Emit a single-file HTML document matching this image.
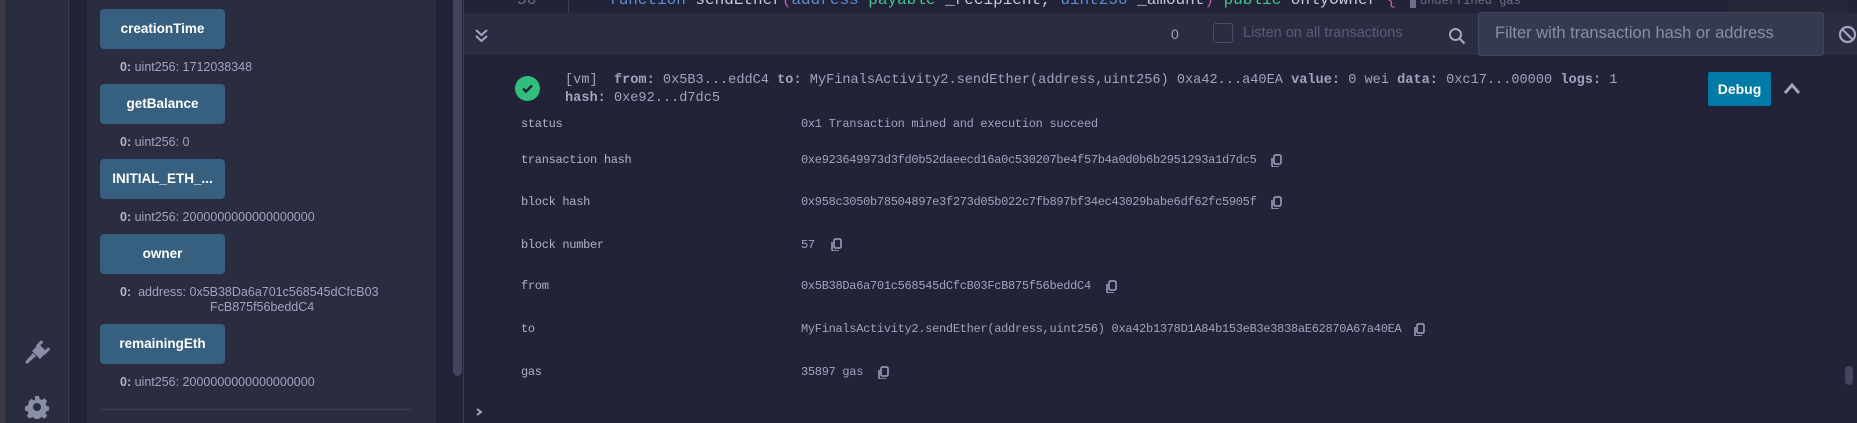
<!DOCTYPE html>
<html><head><meta charset="utf-8"><style>
*{margin:0;padding:0;box-sizing:border-box}
body{width:1857px;height:423px;overflow:hidden;background:#222336;position:relative;font-family:"Liberation Sans",sans-serif}
.a{position:absolute}
.btn{position:absolute;left:100px;width:125px;height:40px;background:#365f80;border-radius:4px;color:#fff;font-weight:bold;font-size:13.5px;text-align:center;line-height:40px}
.res{position:absolute;left:120px;font-size:12.5px;color:#a2a3bd;white-space:nowrap}
.res b{color:#b4b6cc}
.m{font-family:"Liberation Mono",monospace;white-space:nowrap}
.lab{position:absolute;left:521px;font-size:12px;letter-spacing:-0.3px;color:#b0b2c8;font-family:"Liberation Mono",monospace}
.val{position:absolute;left:801px;font-size:12px;letter-spacing:-0.3px;color:#a2a3bd;font-family:"Liberation Mono",monospace;white-space:nowrap}
.cp{position:absolute;width:12px;height:13px}
</style></head><body>
<div class="a" style="left:0;top:0;width:5px;height:423px;background:#3a3a3f"></div>
<div class="a" style="left:5px;top:0;width:63px;height:423px;background:#2a2c3f"></div>
<div class="a" style="left:68px;top:0;width:1px;height:423px;background:#3c3f55"></div>
<div class="a" style="left:69px;top:0;width:18px;height:423px;background:#222336"></div>
<div class="a" style="left:87px;top:0;width:349px;height:423px;background:#2a2c3f"></div>
<div class="a" style="left:436px;top:0;width:27px;height:423px;background:#222336"></div>
<div class="a" style="left:453px;top:0;width:9px;height:376px;background:#41465f;border-radius:0 0 5px 5px"></div>
<div class="a" style="left:463px;top:0;width:1px;height:423px;background:#3c3f55"></div>

<svg class="a" style="left:22px;top:338px" width="30" height="30" viewBox="0 0 30 30"><g fill="#8a8ea5"><path d="M10 13 L17 6 L25 14 L18 21 Z"/><rect x="16" y="2" width="3" height="8" transform="rotate(45 17.5 6)"/><rect x="23" y="9" width="3" height="8" transform="rotate(45 24.5 13)"/><path d="M11 15 L3 24 L5 26 L14 18 Z"/></g></svg>
<svg class="a" style="left:25px;top:395px" width="24" height="24" viewBox="0 0 24 24"><path fill="#8a8ea5" d="M10 1h4l.6 3 2.2 1 2.6-1.7 2.8 2.8-1.7 2.6 1 2.2 3 .6v4l-3 .6-1 2.2 1.7 2.6-2.8 2.8-2.6-1.7-2.2 1-.6 3h-4l-.6-3-2.2-1-2.6 1.7-2.8-2.8 1.7-2.6-1-2.2-3-.6v-4l3-.6 1-2.2L3.6 6.6l2.8-2.8L9 5.5l1-.5zM12 8a4 4 0 100 8 4 4 0 000-8z"/></svg>

<div class="btn" style="top:9px">creationTime</div>
<div class="res" style="top:60px"><b>0:</b> uint256: 1712038348</div>
<div class="btn" style="top:84px">getBalance</div>
<div class="res" style="top:135px"><b>0:</b> uint256: 0</div>
<div class="btn" style="top:159px">INITIAL_ETH_...</div>
<div class="res" style="top:210px"><b>0:</b> uint256: 2000000000000000000</div>
<div class="btn" style="top:234px">owner</div>
<div class="res" style="top:285px"><b>0:</b>&nbsp; address: 0x5B38Da6a701c568545dCfcB03</div>
<div class="res" style="top:300px;left:210px">FcB875f56beddC4</div>
<div class="btn" style="top:324px">remainingEth</div>
<div class="res" style="top:375px"><b>0:</b> uint256: 2000000000000000000</div>
<div class="a" style="left:100px;top:409px;width:312px;height:1px;background:#3c3f55"></div>

<div class="a" style="left:464px;top:0;width:1393px;height:13px;background:#222336;overflow:hidden">
 <div class="a m" style="left:53px;top:-9px;font-size:16px;color:#6b6f88">56</div>
 <div class="a" style="left:104px;top:0;width:1px;height:13px;background:#3c3f55"></div>
 <div class="a m" style="left:145px;top:-9px;font-size:16px;color:#c5c8d8"><span style="color:#5d8ed6">function</span> sendEther<span style="color:#d157a5">(</span><span style="color:#5d8ed6">address</span> <span style="color:#3fc78c">payable</span> _recipient, <span style="color:#5d8ed6">uint256</span> _amount<span style="color:#d157a5">)</span> <span style="color:#3fc78c">public</span> onlyOwner <span style="color:#d157a5">{</span></div>
 <div class="a" style="left:946px;top:0;width:6px;height:8px;background:#6b6f88"></div>
 <div class="a m" style="left:956px;top:-6px;font-size:12px;color:#6b6f88">underfined gas</div>
 <div class="a" style="left:1264px;top:0;width:120px;height:13px;background:#262839"></div>
</div>

<div class="a" style="left:464px;top:13px;width:1393px;height:42px;background:#2a2c3f"></div>
<svg class="a" style="left:474px;top:28px" width="15" height="15" viewBox="0 0 15 15"><path d="M2 2l5.5 5 5.5-5M2 8l5.5 5 5.5-5" stroke="#a2a3bd" stroke-width="2" fill="none"/></svg>
<div class="a" style="left:1171px;top:26px;font-size:14px;color:#a2a3bd">0</div>
<div class="a" style="left:1213px;top:23px;width:20px;height:20px;border:1px solid #4a4e66;border-radius:3px"></div>
<div class="a" style="left:1243px;top:25px;font-size:14.5px;color:#585d78">Listen on all transactions</div>
<svg class="a" style="left:1448px;top:27px" width="18" height="18" viewBox="0 0 18 18"><circle cx="7.5" cy="7.5" r="5.5" stroke="#a2a3bd" stroke-width="2" fill="none"/><path d="M11.5 11.5l5 5" stroke="#a2a3bd" stroke-width="2.2"/></svg>
<div class="a" style="left:1478px;top:12px;width:346px;height:44px;background:#353a50;border:1px solid #41465f;border-radius:3px"></div>
<div class="a" style="left:1495px;top:24px;font-size:16.5px;color:#8a8ea5">Filter with transaction hash or address</div>
<svg class="a" style="left:1838px;top:25px" width="19" height="19" viewBox="0 0 19 19"><circle cx="9.5" cy="9.5" r="7.5" stroke="#a2a3bd" stroke-width="2.2" fill="none"/><path d="M4.5 4.5l10 10" stroke="#a2a3bd" stroke-width="2.2"/></svg>

<svg class="a" style="left:515px;top:76px" width="25" height="25" viewBox="0 0 25 25"><circle cx="12.5" cy="12.5" r="12.5" fill="#2fbf7c"/><path d="M8 12.5l3 3 6-6" stroke="#222336" stroke-width="2.4" fill="none"/></svg>
<div class="a m" style="left:565px;top:72px;font-size:13.6px;color:#a2a3bd;line-height:18px">[vm]&nbsp; <b>from:</b> 0x5B3...eddC4 <b>to:</b> MyFinalsActivity2.sendEther(address,uint256) 0xa42...a40EA <b>value:</b> 0 wei <b>data:</b> 0xc17...00000 <b>logs:</b> 1<br><b>hash:</b> 0xe92...d7dc5</div>
<div class="a" style="left:1708px;top:72px;width:63px;height:34px;background:#007aa6;border-radius:2px;color:#fff;font-weight:bold;font-size:14px;text-align:center;line-height:34px">Debug</div>
<svg class="a" style="left:1783px;top:81px" width="18" height="14" viewBox="0 0 18 14"><path d="M2 12l7-8 7 8" stroke="#a2a3bd" stroke-width="3" fill="none"/></svg>

<div class="lab" style="top:117px">status</div><div class="val" style="top:117px">0x1 Transaction mined and execution succeed</div>
<div class="lab" style="top:153px">transaction hash</div><div class="val" style="top:153px">0xe923649973d3fd0b52daeecd16a0c530207be4f57b4a0d0b6b2951293a1d7dc5</div>
<div class="lab" style="top:195px">block hash</div><div class="val" style="top:195px">0x958c3050b78504897e3f273d05b022c7fb897bf34ec43029babe6df62fc5905f</div>
<div class="lab" style="top:238px">block number</div><div class="val" style="top:238px">57</div>
<div class="lab" style="top:279px">from</div><div class="val" style="top:279px">0x5B38Da6a701c568545dCfcB03FcB875f56beddC4</div>
<div class="lab" style="top:322px">to</div><div class="val" style="top:322px">MyFinalsActivity2.sendEther(address,uint256) 0xa42b1378D1A84b153eB3e3838aE62870A67a40EA</div>
<div class="lab" style="top:365px">gas</div><div class="val" style="top:365px">35897 gas</div>

<svg width="0" height="0" style="position:absolute"><defs><g id="c"><rect x="4" y="1" width="7" height="9" rx="1.5" stroke="#a2a3bd" stroke-width="1.5" fill="none"/><path d="M2 4v7.5a1.5 1.5 0 001.5 1.5H9" stroke="#a2a3bd" stroke-width="1.5" fill="none"/></g></defs></svg>
<svg class="cp" style="left:1270px;top:154px" viewBox="0 0 12 13"><use href="#c"/></svg>
<svg class="cp" style="left:1270px;top:196px" viewBox="0 0 12 13"><use href="#c"/></svg>
<svg class="cp" style="left:830px;top:238px" viewBox="0 0 12 13"><use href="#c"/></svg>
<svg class="cp" style="left:1105px;top:280px" viewBox="0 0 12 13"><use href="#c"/></svg>
<svg class="cp" style="left:1413px;top:323px" viewBox="0 0 12 13"><use href="#c"/></svg>
<svg class="cp" style="left:877px;top:366px" viewBox="0 0 12 13"><use href="#c"/></svg>

<div class="a" style="left:1845px;top:366px;width:8px;height:19px;background:#41465f;border-radius:4px"></div>
<svg class="a" style="left:475px;top:407px" width="10" height="10" viewBox="0 0 10 10"><path d="M2 2l4 3-4 3" stroke="#a2a3bd" stroke-width="2" fill="none"/></svg>
</body></html>
